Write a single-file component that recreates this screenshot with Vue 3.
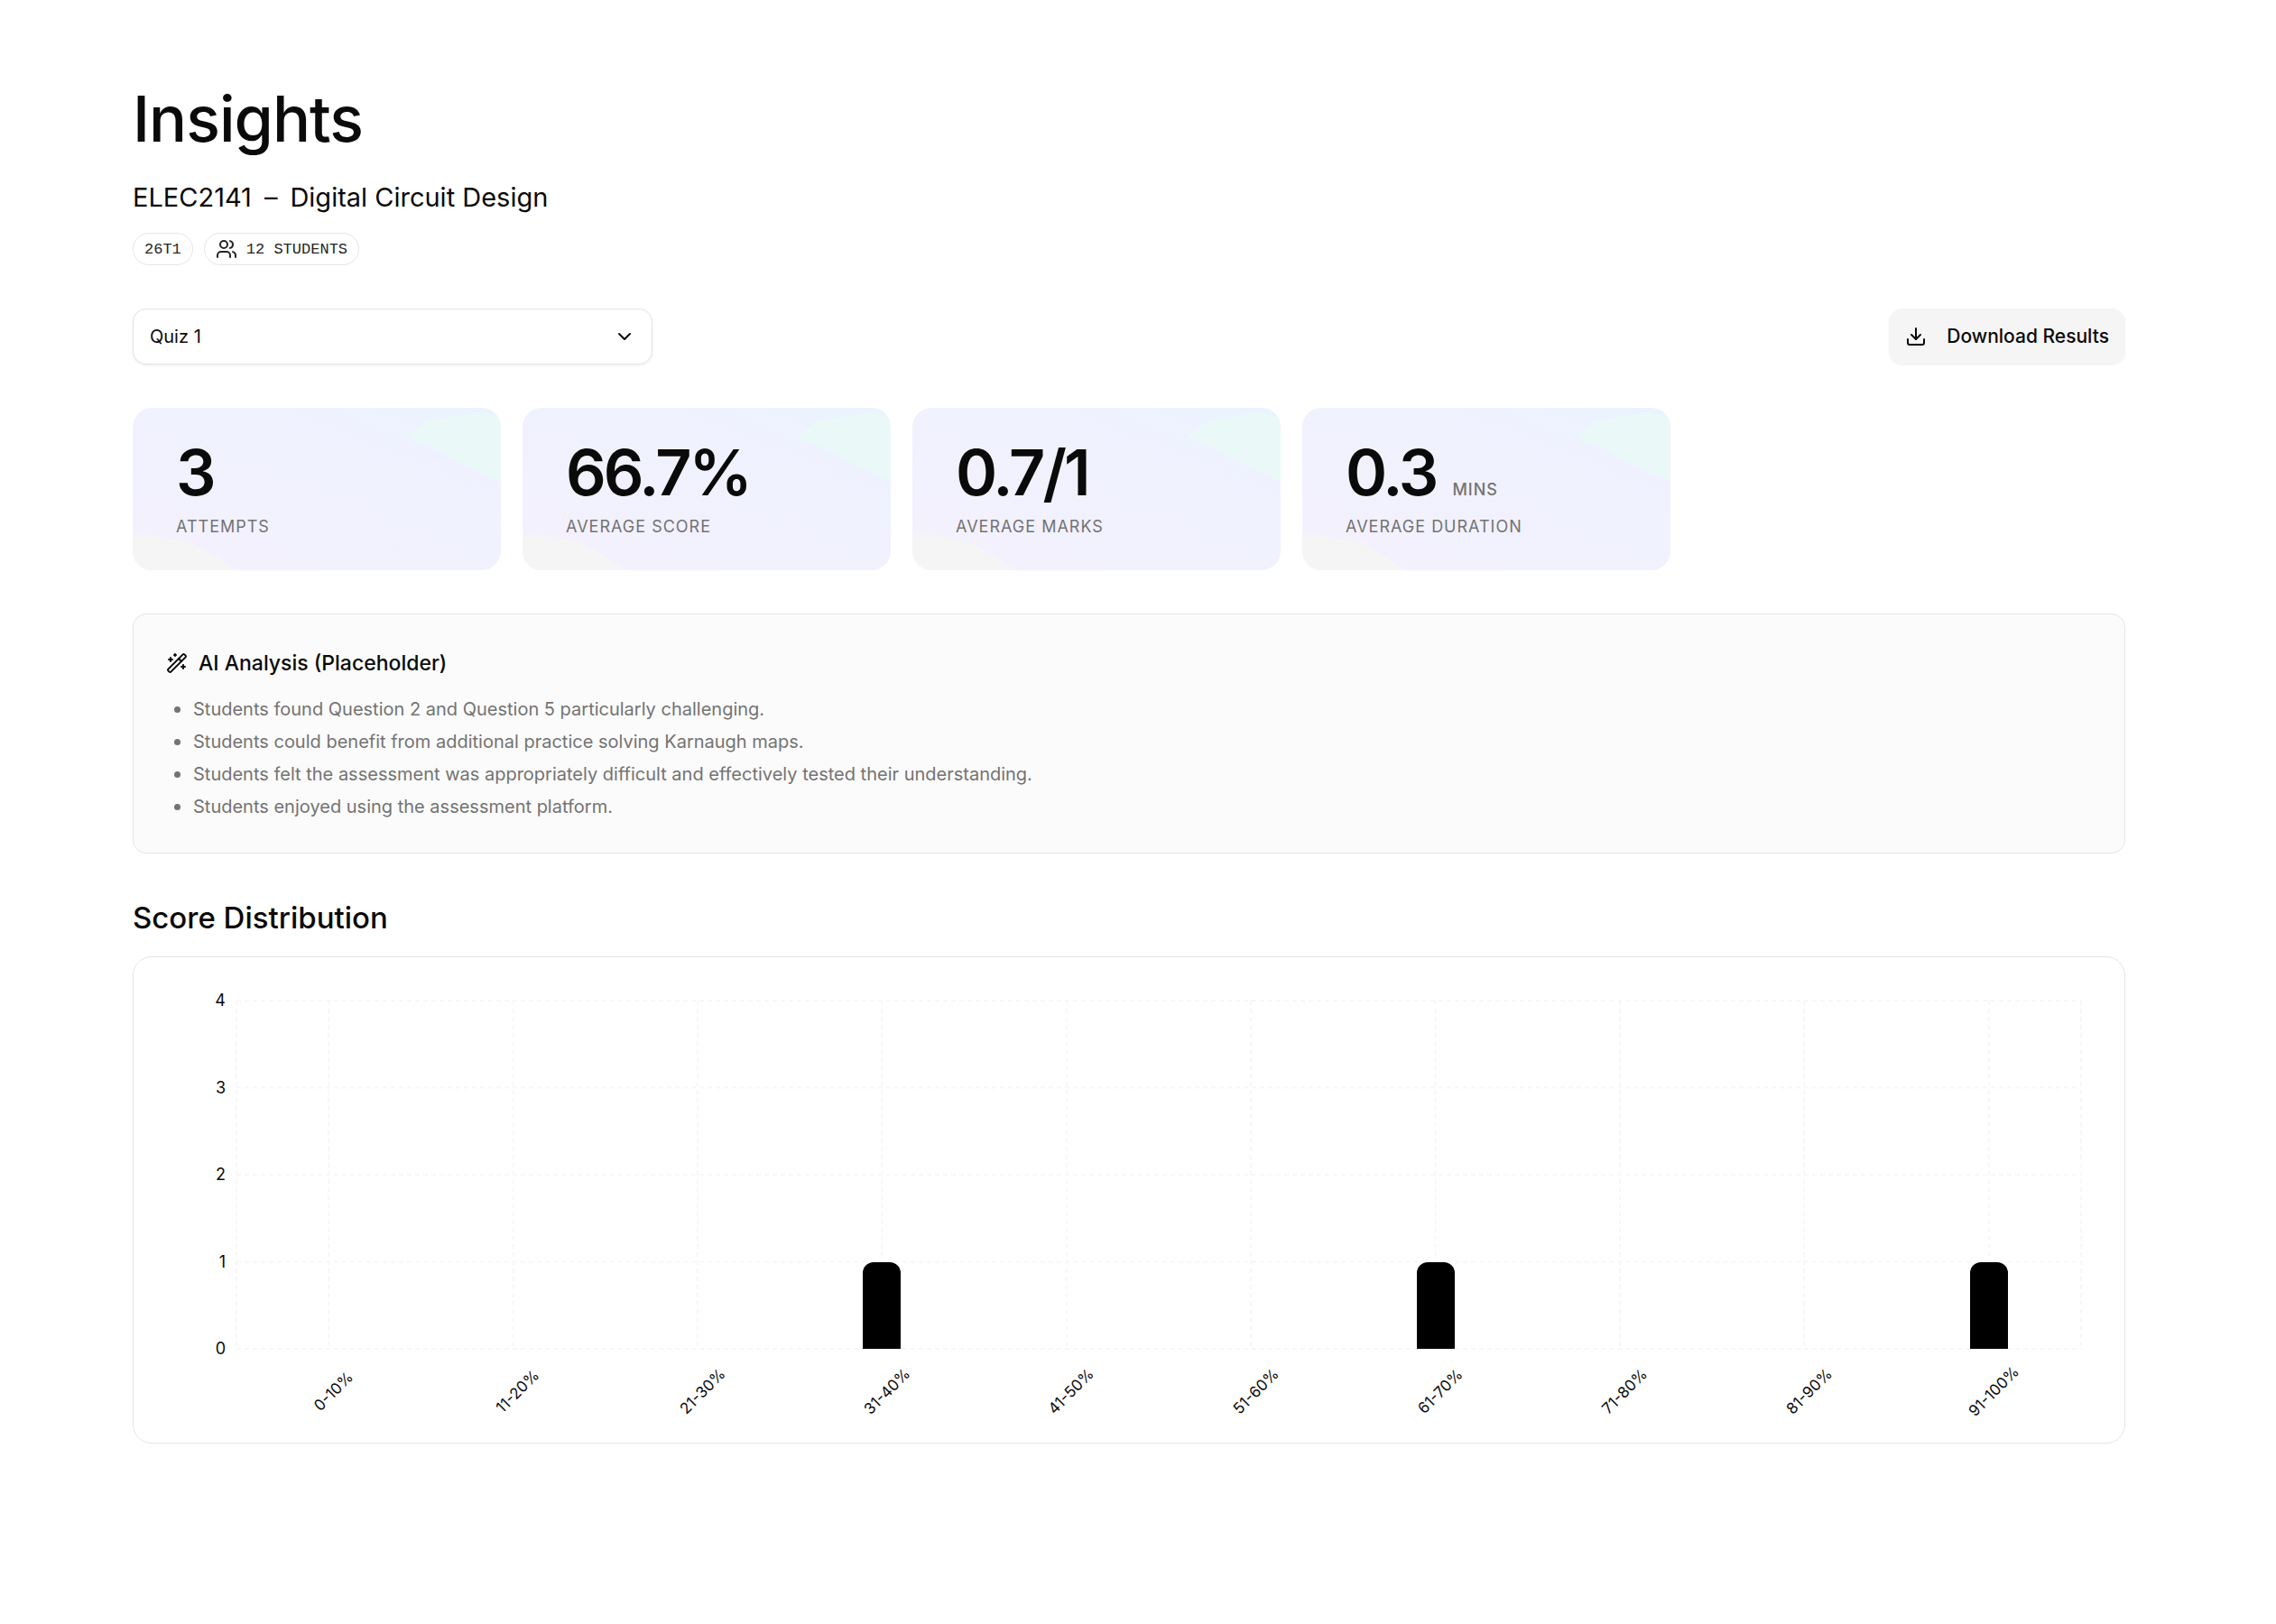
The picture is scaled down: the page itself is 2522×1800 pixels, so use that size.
<script setup>
import { ref } from 'vue'

const quiz = ref('Quiz 1')

const stats = [
  { value: '3', label: 'Attempts' },
  { value: '66.7%', label: 'Average score' },
  { value: '0.7/1', label: 'Average marks' },
  { value: '0.3', unit: 'mins', label: 'Average duration' }
]

const findings = [
  'Students found Question 2 and Question 5 particularly challenging.',
  'Students could benefit from additional practice solving Karnaugh maps.',
  'Students felt the assessment was appropriately difficult and effectively tested their understanding.',
  'Students enjoyed using the assessment platform.'
]

const maxCount = 4
const ticks = [4, 3, 2, 1, 0]
const buckets = [
  { range: '0-10%', count: 0 },
  { range: '11-20%', count: 0 },
  { range: '21-30%', count: 0 },
  { range: '31-40%', count: 1 },
  { range: '41-50%', count: 0 },
  { range: '51-60%', count: 0 },
  { range: '61-70%', count: 1 },
  { range: '71-80%', count: 0 },
  { range: '81-90%', count: 0 },
  { range: '91-100%', count: 1 }
]

const rowLines = ticks.map((t) => `${(t / maxCount) * 100}%`)
const columnLines = [
  '0%',
  ...buckets.map((_, i) => `${((i + 0.5) / buckets.length) * 100}%`),
  '100%'
]
</script>

<template>
  <main class="page">
    <header>
      <h1>Insights</h1>
      <p class="course">
        <span>ELEC2141</span><span>–</span><span>Digital Circuit Design</span>
      </p>
      <div class="badges">
        <span class="badge">26T1</span>
        <span class="badge">
          <svg class="icon" viewBox="0 0 24 24" aria-hidden="true">
            <path d="M16 21v-2a4 4 0 0 0-4-4H6a4 4 0 0 0-4 4v2" />
            <circle cx="9" cy="7" r="4" />
            <path d="M22 21v-2a4 4 0 0 0-3-3.87" />
            <path d="M16 3.13a4 4 0 0 1 0 7.75" />
          </svg>
          12 STUDENTS
        </span>
      </div>
    </header>

    <div class="toolbar">
      <div class="picker">
        <select v-model="quiz" aria-label="Assessment">
          <option>Quiz 1</option>
        </select>
        <svg class="icon chevron" viewBox="0 0 24 24" aria-hidden="true">
          <path d="m6 9 6 6 6-6" />
        </svg>
      </div>
      <button type="button" class="download">
        <svg class="icon" viewBox="0 0 24 24" aria-hidden="true">
          <path d="M21 15v4a2 2 0 0 1-2 2H5a2 2 0 0 1-2-2v-4" />
          <path d="m7 10 5 5 5-5" />
          <path d="M12 15V3" />
        </svg>
        Download Results
      </button>
    </div>

    <section class="stats">
      <article v-for="stat in stats" :key="stat.label" class="stat">
        <svg class="shapes" viewBox="0 0 408 180" preserveAspectRatio="none" aria-hidden="true">
          <path class="mint" d="M305 33Q316 19 331 14Q350 9 390 6L408 11V82L350 54L333 44Z" />
          <path class="grey" d="M0 141Q28 141 54 146Q66 149 83 160L115 180H0Z" />
        </svg>
        <p class="value">
          {{ stat.value }}<span v-if="stat.unit" class="unit">{{ stat.unit }}</span>
        </p>
        <p class="label">{{ stat.label }}</p>
      </article>
    </section>

    <section class="analysis">
      <h2>
        <svg class="icon" viewBox="0 0 24 24" aria-hidden="true">
          <path d="m21.64 3.64-1.28-1.28a1.21 1.21 0 0 0-1.72 0L2.36 18.64a1.21 1.21 0 0 0 0 1.72l1.28 1.28a1.2 1.2 0 0 0 1.72 0L21.64 5.36a1.2 1.2 0 0 0 0-1.72" />
          <path d="m14 7 3 3M5 6v4M19 14v4M10 2v2M7 8H3M21 16h-4M11 3H9" />
        </svg>
        AI Analysis (Placeholder)
      </h2>
      <ul>
        <li v-for="finding in findings" :key="finding">{{ finding }}</li>
      </ul>
    </section>

    <section class="distribution">
      <h2>Score Distribution</h2>
      <div class="chart">
        <div class="y-axis">
          <span v-for="tick in ticks" :key="tick">{{ tick }}</span>
        </div>
        <div class="plot">
          <svg class="lines" aria-hidden="true">
            <line v-for="y in rowLines" :key="'r' + y" x1="0" x2="100%" :y1="y" :y2="y" />
            <line v-for="x in columnLines" :key="'c' + x" :x1="x" :x2="x" y1="0" y2="100%" />
          </svg>
          <div v-for="bucket in buckets" :key="bucket.range" class="slot">
            <div class="bar" :style="{ height: (bucket.count / maxCount) * 100 + '%' }"></div>
          </div>
        </div>
        <div class="x-axis">
          <div v-for="bucket in buckets" :key="bucket.range" class="tick">
            <span>{{ bucket.range }}</span>
          </div>
        </div>
      </div>
    </section>
  </main>
</template>

<style>
body {
  background: #fff;
}
</style>

<style scoped>
.page {
  padding: 96px 167px 96px 147px;
  color: #0a0a0a;
  font-family: Inter, sans-serif;
  font-size: 20px;
}

h1,
h2,
p,
ul {
  margin: 0;
  padding: 0;
}

.icon {
  flex: none;
  width: 24px;
  height: 24px;
  fill: none;
  stroke: currentColor;
  stroke-width: 2;
  stroke-linecap: round;
  stroke-linejoin: round;
}

h1 {
  font-size: 70px;
  font-weight: 500;
  line-height: 72px;
  letter-spacing: -1px;
}

.course {
  display: flex;
  gap: 14px;
  margin-top: 30px;
  font-size: 29px;
  line-height: 42px;
}

.badges {
  display: flex;
  gap: 12px;
  margin-top: 18px;
}

.badge {
  display: flex;
  align-items: center;
  gap: 10px;
  box-sizing: border-box;
  height: 36px;
  padding: 0 12px;
  border: 1px solid #e5e5e5;
  border-radius: 18px;
  color: #262626;
  font-family: "Liberation Mono", monospace;
  font-size: 17px;
}

.toolbar {
  display: flex;
  justify-content: space-between;
  margin-top: 48px;
}

.picker {
  position: relative;
  width: 576px;
}

.picker select {
  display: block;
  box-sizing: border-box;
  width: 100%;
  height: 62px;
  padding: 0 60px 0 18px;
  border: 1px solid #e5e5e5;
  border-radius: 15px;
  background: #fff;
  box-shadow: 0 1px 3px rgba(0, 0, 0, 0.08);
  color: inherit;
  font: inherit;
  appearance: none;
}

.chevron {
  position: absolute;
  top: 19px;
  right: 19px;
  pointer-events: none;
}

.download {
  display: flex;
  align-items: center;
  gap: 22px;
  height: 62px;
  padding: 0 18px;
  border: 0;
  border-radius: 15px;
  background: #f5f5f5;
  box-shadow: 0 1px 2px rgba(0, 0, 0, 0.05);
  color: inherit;
  font: 500 21px/30px Inter, sans-serif;
}

.stats {
  display: grid;
  grid-template-columns: repeat(4, 1fr);
  gap: 24px;
  max-width: 1704px;
  margin-top: 48px;
}

.stat {
  position: relative;
  box-sizing: border-box;
  min-height: 180px;
  padding: 36px 48px 35px;
  overflow: hidden;
  border-radius: 21px;
  background: linear-gradient(22deg, #f6f1fd 0%, #f2f1fe 30%, #eff2fe 75%, #e9f4fe 100%);
}

.shapes {
  position: absolute;
  inset: 0;
  width: 100%;
  height: 100%;
}

.mint {
  fill: #eaf8f8;
}

.grey {
  fill: #f5f5f5;
}

.value {
  position: relative;
  display: flex;
  align-items: baseline;
  gap: 18px;
  font-size: 70px;
  font-weight: 600;
  line-height: 72px;
  letter-spacing: -3px;
}

.unit,
.label {
  color: #737373;
  font-size: 18px;
  line-height: 27px;
  letter-spacing: 1px;
  text-transform: uppercase;
}

.unit {
  font-weight: 500;
}

.label {
  position: relative;
  margin-top: 10px;
}

.analysis {
  margin-top: 48px;
  padding: 36px;
  border: 1px solid #e5e5e5;
  border-radius: 15px;
  background: #fbfbfb;
}

.analysis h2 {
  display: flex;
  align-items: center;
  gap: 12px;
  font-size: 23px;
  font-weight: 500;
  line-height: 36px;
}

.analysis ul {
  display: grid;
  gap: 6px;
  margin-top: 18px;
  color: #737373;
  line-height: 30px;
  list-style: none;
}

.analysis li {
  display: flex;
  align-items: center;
  gap: 14px;
  padding-left: 9px;
}

.analysis li::before {
  flex: none;
  width: 7px;
  height: 7px;
  border-radius: 50%;
  background: #737373;
  content: "";
}

.distribution {
  margin-top: 48px;
}

.distribution h2 {
  font-size: 33px;
  font-weight: 500;
  line-height: 46px;
}

.chart {
  display: grid;
  grid-template-columns: 66px 1fr;
  grid-template-rows: 386px 93px;
  margin-top: 20px;
  padding: 48px 48px 11px;
  border: 1px solid #e5e5e5;
  border-radius: 21px;
}

.y-axis {
  display: flex;
  flex-direction: column;
  justify-content: space-between;
  margin: -9px 0;
  padding-right: 12px;
  font-size: 18px;
  line-height: 18px;
  text-align: right;
}

.plot {
  position: relative;
  display: grid;
  grid-template-columns: repeat(10, 1fr);
}

.lines {
  position: absolute;
  inset: 0;
  width: 100%;
  height: 100%;
  overflow: visible;
  stroke: #f7f7f7;
  stroke-width: 2;
  stroke-dasharray: 5 4;
}

.slot {
  position: relative;
  display: flex;
  align-items: flex-end;
  justify-content: center;
}

.bar {
  width: 42px;
  border-radius: 12px 12px 0 0;
  background: #000;
}

.x-axis {
  display: grid;
  grid-column: 2;
  grid-template-columns: repeat(10, 1fr);
}

.tick {
  display: flex;
  align-items: center;
  justify-content: center;
  padding-left: 10px;
  font-size: 17px;
  line-height: 18px;
}

.tick span {
  transform: rotate(-45deg);
}
</style>
